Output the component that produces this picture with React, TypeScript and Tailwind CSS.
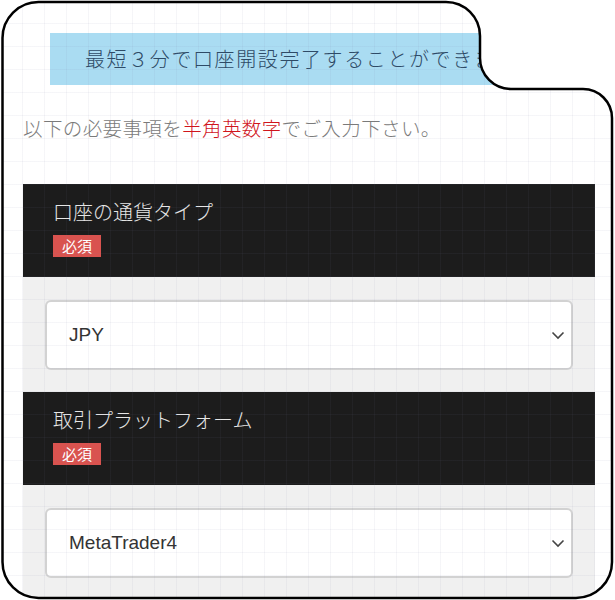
const jp = "font-['Noto_Sans_CJK_JP','Noto_Sans',sans-serif]";
const latin = "font-['Liberation_Sans','Noto_Sans_CJK_JP',sans-serif]";

const fields = [
  { label: "口座の通貨タイプ", value: "JPY" },
  { label: "取引プラットフォーム", value: "MetaTrader4" },
];

const Chevron = () => (
  <svg width="14" height="9" viewBox="0 0 14 9" className="shrink-0">
    <polyline points="1.5,1.5 7,7 12.5,1.5" fill="none" stroke="#444" strokeWidth="1.6" />
  </svg>
);

const Frame = () => (
  <svg
    width="615"
    height="600"
    viewBox="0 0 615 600"
    className="absolute inset-0 pointer-events-none"
  >
    <path
      fillRule="evenodd"
      fill="#fff"
      d="M0 0 H615 V600 H0 Z M2.5 38 A36 36 0 0 1 38.5 2 H446 A34 34 0 0 1 480 36 V58 A31 31 0 0 0 511 89 H583 A29 29 0 0 1 612 118 V562 A36 36 0 0 1 576 598 H38.5 A36 36 0 0 1 2.5 562 Z"
    />
    <path
      fill="none"
      stroke="#000"
      strokeWidth="2.5"
      d="M2.5 38 A36 36 0 0 1 38.5 2 H446 A34 34 0 0 1 480 36 V58 A31 31 0 0 0 511 89 H583 A29 29 0 0 1 612 118 V562 A36 36 0 0 1 576 598 H38.5 A36 36 0 0 1 2.5 562 Z"
    />
  </svg>
);

export default function App() {
  return (
    <div className={`relative w-[615px] h-[600px] overflow-hidden bg-white ${jp}`}>
      {/* form content */}
      <div className="w-[595px] pl-[23px] pt-[33px]">
        <div className="ml-[27px] w-[560px] h-[52px] bg-[#aadcf2] flex items-center pl-[35px]">
          <span className="text-[20px] tracking-[0.08em] font-light text-[#2e4a66] whitespace-nowrap">
            最短３分で口座開設完了することができます
          </span>
        </div>

        <p className="mt-[29px] text-[19.5px] leading-[28px] font-light tracking-[0.02em] text-[#7a7a7a] whitespace-nowrap">
          以下の必要事項を<span className="text-[#d0141c]">半角英数字</span>でご入力下さい。
        </p>

        <div className="mt-[42px]">
          {fields.map((f) => (
            <div key={f.label}>
              <div className="h-[93px] bg-[#1c1c1c] pl-[30px] pt-[14px]">
                <p className="text-[20px] leading-[28px] font-light text-[#e6e6e6]">{f.label}</p>
                <span className="mt-[9px] inline-flex h-[22px] w-[48px] items-center justify-center bg-[#d9534f] text-[15px] text-white">
                  必須
                </span>
              </div>
              <div className="bg-[#f0f0f0] px-[22px] pt-[23px] pb-[22px]">
                <div className="h-[70px] rounded-[6px] border-2 border-[#d2d2d2] bg-white flex items-center justify-between pl-[22px] pr-[6px]">
                  <span className={`${latin} text-[19px] text-[#333]`}>{f.value}</span>
                  <Chevron />
                </div>
              </div>
            </div>
          ))}
        </div>
      </div>

      {/* faint screenshot grid */}
      <div className="absolute inset-0 pointer-events-none bg-[linear-gradient(to_right,rgba(120,125,160,0.07)_1px,transparent_1px),linear-gradient(to_bottom,rgba(120,125,160,0.07)_1px,transparent_1px)] bg-[size:22px_23px]" />

      <Frame />
    </div>
  );
}
